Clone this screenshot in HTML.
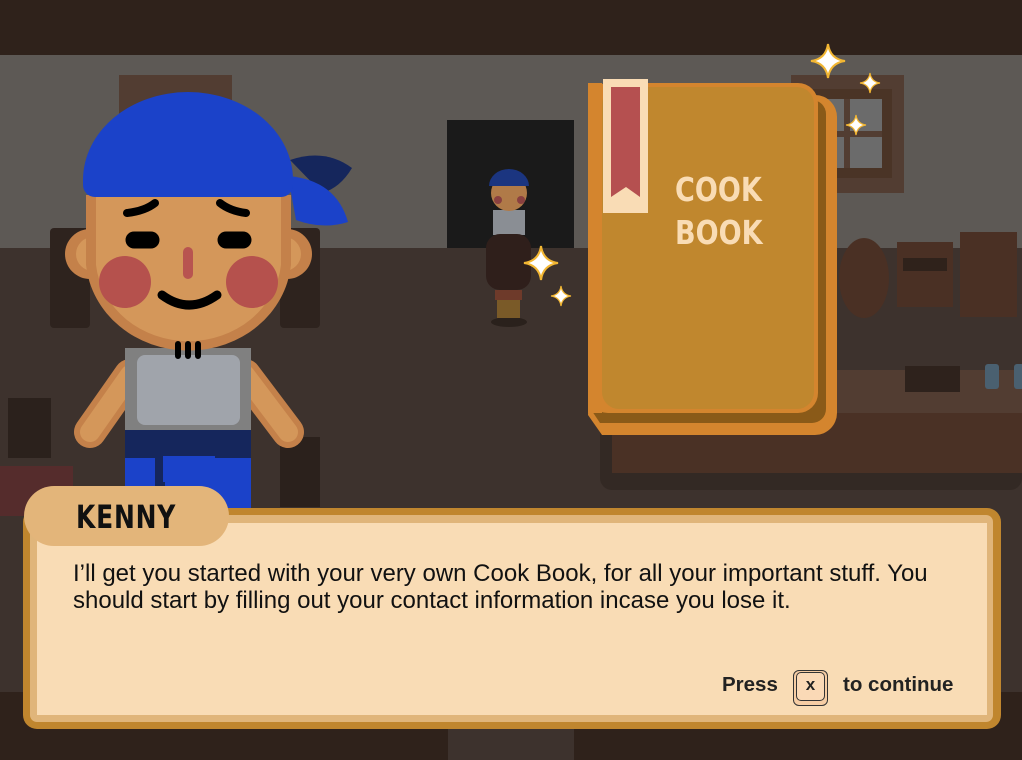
<!DOCTYPE html>
<html><head><meta charset="utf-8"><style>
html,body{margin:0;padding:0;width:1022px;height:760px;overflow:hidden;background:#2f221b;font-family:"Liberation Sans",sans-serif}
#scene{position:absolute;left:0;top:0}
.txt{position:absolute;left:73px;top:560px;font-size:24px;line-height:27px;color:#111;width:940px;white-space:nowrap}
.name{position:absolute;left:76px;top:498px;font-size:32px;font-weight:bold;color:#111;letter-spacing:1px;transform:scaleX(0.78);transform-origin:left;font-family:"DejaVu Sans","Liberation Sans",sans-serif}
.press{position:absolute;top:673px;font-size:20.5px;font-weight:bold;color:#222}
.key{position:absolute;left:793px;top:670px;width:33px;height:34px;border:1.5px solid #333;border-radius:6px;background:#f6cda4}
.key div{position:absolute;left:2px;top:1px;width:27px;height:27px;border:1.5px solid #333;border-radius:5px;background:#fad9b6;text-align:center;font-weight:bold;font-size:17px;line-height:24px;color:#222}
.cb{position:absolute;left:675px;top:168px;font-size:33px;font-weight:bold;color:#f9dcb5;line-height:43px;font-family:"DejaVu Sans",sans-serif;transform:scaleX(0.82);transform-origin:left}
</style></head><body>
<svg id="scene" width="1022" height="760" viewBox="0 0 1022 760">
<defs>
<path id="sp" d="M0,-1 Q0.12,-0.12 1,0 Q0.12,0.12 0,1 Q-0.12,0.12 -1,0 Q-0.12,-0.12 0,-1Z"/>
</defs>
<rect width="1022" height="760" fill="#2f221b"/>
<rect y="55" width="1022" height="193" fill="#5d5955"/>
<rect y="248" width="1022" height="444" fill="#3d322d"/>
<rect x="448" y="692" width="126" height="68" fill="#3d322d"/>
<rect x="119" y="75" width="113" height="118" fill="#523d32"/>
<rect x="791" y="75" width="113" height="118" fill="#523d32"/>
<rect x="804" y="89" width="88" height="89" fill="#4a3426"/>
<rect x="812" y="99" width="70" height="69" fill="#6b6b6b"/>
<rect x="844" y="99" width="6" height="69" fill="#523d32"/>
<rect x="812" y="131" width="70" height="6" fill="#523d32"/>
<rect x="447" y="120" width="127" height="128" fill="#1a1a1a"/>
<rect x="50" y="228" width="40" height="100" rx="4" fill="#2e231e"/>
<rect x="280" y="228" width="40" height="100" rx="4" fill="#2e231e"/>
<rect x="8" y="398" width="43" height="60" fill="#2b211c"/>
<rect x="0" y="466" width="73" height="50" fill="#552c2c"/>
<rect x="280" y="437" width="40" height="70" fill="#2b211c"/>
<rect x="600" y="370" width="422" height="120" rx="12" fill="#332924"/>
<rect x="612" y="370" width="410" height="43" fill="#523d32"/>
<rect x="612" y="413" width="410" height="60" fill="#4a3125"/>
<rect x="905" y="366" width="55" height="26" fill="#2e221c"/>
<rect x="985" y="364" width="14" height="25" rx="3" fill="#4a6070"/>
<rect x="1014" y="364" width="10" height="25" rx="3" fill="#4a6070"/>
<ellipse cx="864" cy="278" rx="25" ry="40" fill="#4a3024"/>
<rect x="897" y="242" width="56" height="65" fill="#4a3024"/>
<rect x="903" y="258" width="44" height="13" fill="#2f221b"/>
<rect x="960" y="232" width="57" height="85" fill="#4a3024"/>
<ellipse cx="509" cy="322" rx="18" ry="5" fill="#2a211c"/>
<rect x="493" y="210" width="32" height="25" fill="#8a8e94"/>
<circle cx="509" cy="193" r="18" fill="#b07a48"/>
<path d="M489,186 a20,17 0 0 1 40,0 Z" fill="#1b3580"/>
<circle cx="498" cy="200" r="4" fill="#8a4040"/><circle cx="521" cy="200" r="4" fill="#8a4040"/>
<rect x="486" y="234" width="45" height="56" rx="14" fill="#2f1f1b"/>
<rect x="495" y="290" width="27" height="10" fill="#6e3a2a"/>
<rect x="497" y="300" width="23" height="18" fill="#7a5a28"/>
<path d="M600,95 h215 a22,22 0 0 1 22,22 v296 a22,22 0 0 1 -22,22 h-213 l-14,-20 z" fill="#d4852e"/>
<path d="M602,100 h210 a14,14 0 0 1 14,14 v295 a14,14 0 0 1 -14,14 h-212 l-8,-12 z" fill="#8a5a18"/>
<rect x="588" y="83" width="230" height="330" rx="20" fill="#d4852e"/>
<rect x="602" y="87" width="212" height="322" rx="17" fill="#c0872e"/>
<rect x="588" y="83" width="14" height="330" fill="#d4852e"/>
<rect x="603" y="79" width="45" height="134" fill="#f9dcb5"/>
<path d="M611,87 h29 v110 l-14,-10 l-15,10 z" fill="#b55050"/>
<g fill="#fff" stroke="#f2b632" stroke-width="0.12">
<use href="#sp" transform="translate(828,61) scale(17)"/>
<use href="#sp" transform="translate(870,83) scale(10)"/>
<use href="#sp" transform="translate(856,125) scale(10)"/>
<use href="#sp" transform="translate(541,263) scale(17)"/>
<use href="#sp" transform="translate(561,296) scale(10)"/>
</g>
<g stroke-linecap="round">
<line x1="130" y1="375" x2="90" y2="432" stroke="#c4814a" stroke-width="32"/>
<line x1="130" y1="375" x2="90" y2="432" stroke="#d4975a" stroke-width="20"/>
<line x1="245" y1="375" x2="288" y2="432" stroke="#c4814a" stroke-width="32"/>
<line x1="245" y1="375" x2="288" y2="432" stroke="#d4975a" stroke-width="20"/>
</g>
<rect x="125" y="348" width="126" height="85" fill="#808080"/>
<rect x="137" y="355" width="103" height="70" rx="8" fill="#a0a4ab"/>
<rect x="125" y="430" width="126" height="30" fill="#15265c"/>
<rect x="125" y="458" width="126" height="60" fill="#1b42c9"/>
<rect x="155" y="456" width="10" height="60" fill="#15265c"/>
<rect x="163" y="456" width="52" height="26" fill="#1b42c9"/>
<circle cx="90" cy="254" r="25" fill="#c4814a"/>
<circle cx="93" cy="254" r="17" fill="#d4975a"/>
<circle cx="287" cy="254" r="25" fill="#c4814a"/>
<circle cx="284" cy="254" r="17" fill="#d4975a"/>
<path d="M86,195 h205 v70 a103,95 0 0 1 -205,0 z" fill="#c4814a"/>
<path d="M96,195 h185 v70 a93,85 0 0 1 -185,0 z" fill="#d4975a"/>
<path d="M290,160 q35,-12 62,8 q-12,20 -30,25 z" fill="#15265c"/>
<path d="M288,176 q48,4 60,46 q-25,8 -52,-2 z" fill="#1b42c9"/>
<path d="M83,180 a105,88 0 0 1 210,0 v5 a12,12 0 0 1 -12,12 h-186 a12,12 0 0 1 -12,-12 z" fill="#1b42c9"/>
<g stroke="#000" stroke-linecap="round" fill="none">
<path d="M127,213 q18,-2 28,-10" stroke-width="8"/>
<path d="M220,203 q10,8 26,10" stroke-width="8"/>
<line x1="134" y1="240" x2="151" y2="240" stroke-width="17"/>
<line x1="226" y1="240" x2="243" y2="240" stroke-width="17"/>
<path d="M162,295 q27,20 55,0" stroke-width="9"/>
<path d="M178,344v12 M188,344v12 M198,344v12" stroke-width="6"/>
</g>
<line x1="188" y1="252" x2="188" y2="274" stroke="#b85450" stroke-width="10" stroke-linecap="round"/>
<circle cx="125" cy="282" r="26" fill="#b5514d"/>
<circle cx="252" cy="282" r="26" fill="#b5514d"/>
<rect x="23" y="508" width="978" height="221" rx="14" fill="#c0862e"/>
<rect x="30" y="515" width="963" height="207" rx="7" fill="#e0b57a"/>
<rect x="37" y="523" width="950" height="192" fill="#f9dcb5"/>
<rect x="24" y="486" width="205" height="60" rx="30" fill="#e3b57a"/>
</svg>
<div class="name">KENNY</div>
<div class="cb">COOK<br>BOOK</div>
<div class="txt">I’ll get you started with your very own Cook Book, for all your important stuff. You<br>should start by filling out your contact information incase you lose it.</div>
<div class="press" style="left:722px">Press</div>
<div class="key"><div>x</div></div>
<div class="press" style="left:843px">to continue</div>
</body></html>
